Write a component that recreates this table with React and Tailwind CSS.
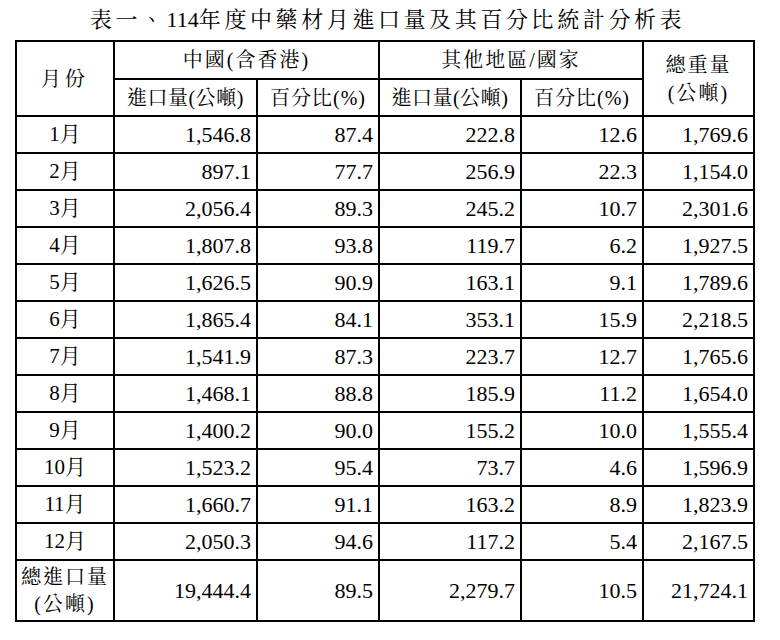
const ROWS = [
  ['1月', '1,546.8', '87.4', '222.8', '12.6', '1,769.6'],
  ['2月', '897.1', '77.7', '256.9', '22.3', '1,154.0'],
  ['3月', '2,056.4', '89.3', '245.2', '10.7', '2,301.6'],
  ['4月', '1,807.8', '93.8', '119.7', '6.2', '1,927.5'],
  ['5月', '1,626.5', '90.9', '163.1', '9.1', '1,789.6'],
  ['6月', '1,865.4', '84.1', '353.1', '15.9', '2,218.5'],
  ['7月', '1,541.9', '87.3', '223.7', '12.7', '1,765.6'],
  ['8月', '1,468.1', '88.8', '185.9', '11.2', '1,654.0'],
  ['9月', '1,400.2', '90.0', '155.2', '10.0', '1,555.4'],
  ['10月', '1,523.2', '95.4', '73.7', '4.6', '1,596.9'],
  ['11月', '1,660.7', '91.1', '163.2', '8.9', '1,823.9'],
  ['12月', '2,050.3', '94.6', '117.2', '5.4', '2,167.5'],
];

const cell = 'border-2 border-black p-0';
const num = 'text-right pr-[5px] align-middle text-[22px]';

export default function App() {
  return (
    <div className="w-[780px] h-[640px] bg-white text-black font-['Liberation_Serif','Noto_Serif_CJK_TC','Noto_Sans_CJK_TC',serif]">
      <div className="pl-[15px] w-[768px]">
        <h1 className="h-[40px] flex items-center justify-center pr-[8px] text-[22px] tracking-[3.6px] font-normal leading-none">
          表一、<span className="tracking-normal">114</span>年度中藥材月進口量及其百分比統計分析表
        </h1>
        <table className="table-fixed border-collapse w-[738px] text-[21px] leading-none">
          <colgroup>
            <col className="w-[98px]" />
            <col className="w-[143px]" />
            <col className="w-[122px]" />
            <col className="w-[142px]" />
            <col className="w-[122px]" />
            <col className="w-[111px]" />
          </colgroup>
          <thead>
            <tr className="h-[38px]">
              <th rowSpan={2} className={`${cell} font-normal text-[20px] tracking-[4px]`}>月份</th>
              <th colSpan={2} className={`${cell} font-normal text-[20px] tracking-[2px]`}>中國(含香港)</th>
              <th colSpan={2} className={`${cell} font-normal text-[20px] tracking-[2px]`}>其他地區/國家</th>
              <th rowSpan={2} className={`${cell} font-normal text-[20px] tracking-[2px]`}>
                <div className="flex flex-col items-center gap-[8px]">
                  <span>總重量</span>
                  <span>(公噸)</span>
                </div>
              </th>
            </tr>
            <tr className="h-[37px]">
              <th className={`${cell} font-normal text-[20px] tracking-[0.5px]`}>進口量(公噸)</th>
              <th className={`${cell} font-normal text-[20px] tracking-[1px]`}>百分比(%)</th>
              <th className={`${cell} font-normal text-[20px] tracking-[0.5px]`}>進口量(公噸)</th>
              <th className={`${cell} font-normal text-[20px] tracking-[1px]`}>百分比(%)</th>
            </tr>
          </thead>
          <tbody>
            {ROWS.map((r) => (
              <tr key={r[0]} className="h-[37px]">
                <td className={`${cell} text-center align-middle`}>{r[0]}</td>
                {r.slice(1).map((v, i) => (
                  <td key={i} className={`${cell} ${num}`}>{v}</td>
                ))}
              </tr>
            ))}
            <tr className="h-[61px]">
              <td className={`${cell} text-center align-middle text-[20px] tracking-[2px]`}>
                <div className="flex flex-col items-center gap-[7px]">
                  <span>總進口量</span>
                  <span>(公噸)</span>
                </div>
              </td>
              <td className={`${cell} ${num}`}>19,444.4</td>
              <td className={`${cell} ${num}`}>89.5</td>
              <td className={`${cell} ${num}`}>2,279.7</td>
              <td className={`${cell} ${num}`}>10.5</td>
              <td className={`${cell} ${num}`}>21,724.1</td>
            </tr>
          </tbody>
        </table>
      </div>
    </div>
  );
}
